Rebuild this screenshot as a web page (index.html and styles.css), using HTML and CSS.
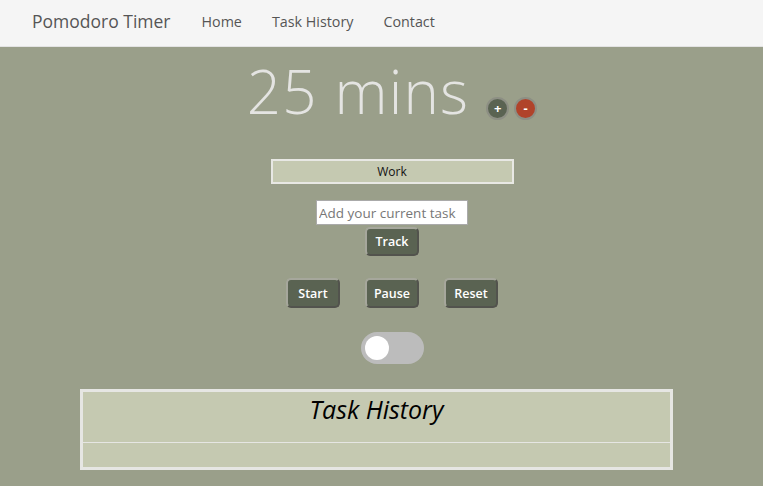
FILE: index.html
```html
<!DOCTYPE html>
<html>
<head>
<meta charset="utf-8">
<link rel="stylesheet" href="styles.css">
</head>
<body>
<nav class="navbar">
  <a class="brand" href="#">Pomodoro Timer</a>
  <ul class="nav-links">
    <li><a href="#">Home</a></li>
    <li><a href="#">Task History</a></li>
    <li><a href="#">Contact</a></li>
  </ul>
</nav>
<main class="main">
  <div class="timer">
    <h1 class="time">25 mins</h1>
    <div class="adjust">
      <button class="circle plus">+</button>
      <button class="circle minus">-</button>
    </div>
  </div>
  <div class="mode">Work</div>
  <input class="task-input" type="text" placeholder="Add your current task">
  <button class="btn">Track</button>
  <div class="controls">
    <button class="btn">Start</button>
    <button class="btn">Pause</button>
    <button class="btn">Reset</button>
  </div>
  <div class="toggle"><span class="knob"></span></div>
</main>
<table class="history">
  <thead><tr><th>Task History</th></tr></thead>
  <tbody><tr><td></td></tr></tbody>
</table>
</body>
</html>
```
FILE: styles.css
```css
* { box-sizing: border-box; }
html, body { margin: 0; padding: 0; }
body {
  background: #9a9f8a;
  font-family: "Open Sans", "Liberation Sans", sans-serif;
  height: 486px;
  overflow: hidden;
}
.navbar {
  display: flex;
  align-items: center;
  height: 47px;
  background: #f5f5f5;
  border-bottom: 1px solid #e3e3e3;
  padding-left: 32px;
  padding-bottom: 4px;
}
.brand {
  color: #555;
  text-decoration: none;
  font-size: 17.5px;
  margin-right: 16px;
}
.nav-links {
  display: flex;
  list-style: none;
  margin: 0;
  padding: 0;
}
.nav-links a {
  display: block;
  padding: 0 15px;
  color: #555;
  text-decoration: none;
  font-size: 14.3px;
}
.main {
  display: flex;
  flex-direction: column;
  align-items: center;
  padding-left: 21px;
}
.timer {
  display: flex;
  align-items: flex-end;
  margin-top: 11px;
}
.time {
  margin: 0;
  font-weight: 300;
  font-size: 60px;
  line-height: 66px;
  color: #e4e4e2;
  letter-spacing: 1.2px;
}
.adjust {
  display: flex;
  gap: 5px;
  margin-left: 17px;
  margin-bottom: 4px;
}
.circle {
  width: 23px;
  height: 23px;
  border-radius: 50%;
  border: 2px solid #8d8f84;
  color: #fff;
  font-weight: bold;
  font-size: 13px;
  line-height: 17px;
  padding: 0;
  font-family: inherit;
}
.plus { background: #5a6352; }
.minus { background: #b0432a; }
.mode {
  margin-top: 35px;
  width: 243px;
  height: 25px;
  background: #c5c9b1;
  border: 2px solid #e8e8e4;
  text-align: center;
  font-size: 12px;
  line-height: 21px;
  color: #111;
}
.task-input {
  margin-top: 16px;
  width: 152px;
  height: 25px;
  border: 1px solid #aaa;
  background: #fff;
  font-family: inherit;
  font-size: 13.5px;
  padding: 0 2px;
}
.task-input::placeholder { color: #777; }
.btn {
  width: 54px;
  height: 30px;
  background: #5a6352;
  color: #fff;
  border: 2px outset #a6a79c;
  border-radius: 5px;
  font-family: inherit;
  font-size: 12.5px;
  font-weight: 600;
  padding: 0;
}
.main > .btn {
  margin-top: 2px;
  height: 29px;
}
.controls {
  display: flex;
  gap: 25px;
  margin-top: 22px;
}
.toggle {
  margin-top: 24px;
  width: 63px;
  height: 32px;
  border-radius: 16px;
  background: #bcbcbc;
  padding: 4px;
}
.knob {
  display: block;
  width: 24px;
  height: 24px;
  border-radius: 50%;
  background: #fff;
}
.history {
  margin: 25px 0 0 80px;
  width: 593px;
  border-collapse: collapse;
  border: 3px solid #e6e6e3;
  background: #c5c9b1;
}
.history th {
  height: 52px;
  vertical-align: top;
  font-style: italic;
  font-weight: normal;
  font-size: 25px;
  line-height: 30px;
  padding: 2px 0 0;
  color: #000;
  border-bottom: 1px solid #e6e6e3;
}
.history td {
  height: 26px;
  padding: 0;
}
```
